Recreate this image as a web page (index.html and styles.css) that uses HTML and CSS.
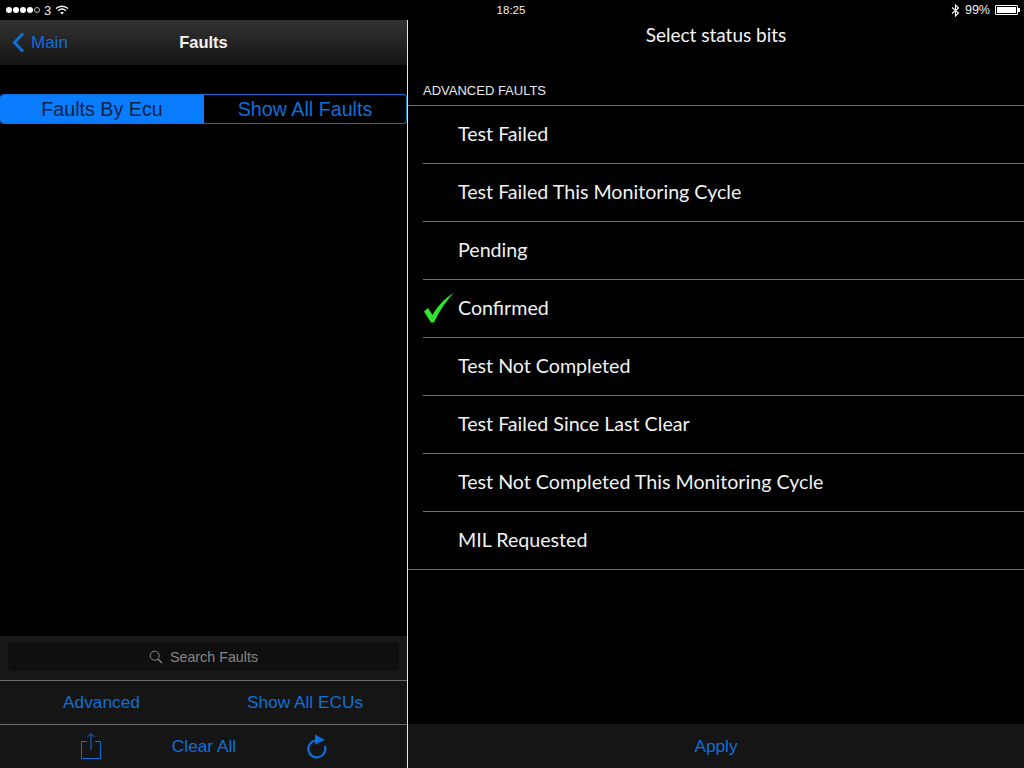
FILE: index.html
```html
<!DOCTYPE html>
<html lang="en">
<head>
<meta charset="utf-8">
<title>Faults</title>
<link rel="stylesheet" href="styles.css">
</head>
<body>
<div class="app">
  <header class="status">
    <div class="status-left">
      <span class="dots"><i></i><i></i><i></i><i></i><i class="empty"></i></span>
      <span class="carrier">3</span>
      <svg class="wifi" width="14" height="10" viewBox="0 0 14 10"><path d="M1 3.600C4.400.5 9.600.5 13 3.600" fill="none" stroke="#fff" stroke-width="1.400"/><path d="M3.100 5.700c2.300-2 5.500-2 7.800 0" fill="none" stroke="#fff" stroke-width="1.400"/><path d="M7 9.600 5 7.600c1.200-.9 2.800-.9 4 0z" fill="#fff"/></svg>
    </div>
    <div class="status-time">18:25</div>
    <div class="status-right">
      <svg class="bt" width="9" height="13" viewBox="0 0 9 13"><path d="M1 3.500 7.500 9 4.500 12V1L7.500 4 1 9.500" fill="none" stroke="#fff" stroke-width="1.100"/></svg>
      <span class="pct">99%</span>
      <span class="battery"><span class="battery-fill"></span></span>
    </div>
  </header>
  <div class="panes">
    <section class="left">
      <nav class="nav">
        <div class="back">
          <svg width="13" height="21" viewBox="0 0 13 21"><path d="M11 1.500 2.500 10.500 11 19.500" fill="none" stroke="#0f6fd8" stroke-width="3"/></svg>
          <span>Main</span>
        </div>
        <div class="nav-title">Faults</div>
      </nav>
      <div class="segment">
        <div class="seg seg-on">Faults By Ecu</div>
        <div class="seg seg-off">Show All Faults</div>
      </div>
      <div class="grow"></div>
      <div class="search-bar">
        <div class="search-field">
          <svg width="14" height="14" viewBox="0 0 14 14"><circle cx="5.700" cy="5.700" r="4.500" fill="none" stroke="#8a8a8a" stroke-width="1"/><path d="M9 9l4 4" stroke="#8a8a8a" stroke-width="1.200"/></svg>
          <span>Search Faults</span>
        </div>
      </div>
      <div class="actions">
        <span class="act act-a">Advanced</span>
        <span class="act act-b">Show All ECUs</span>
      </div>
      <div class="toolbar">
        <svg class="share" width="22" height="28" viewBox="0 0 22 28"><path d="M7 9.500H1.500v17h19v-17H15" fill="none" stroke="#0f6fd8" stroke-width="1"/><path d="M11 18V1.500M7.500 5 11 1.500 14.500 5" fill="none" stroke="#0f6fd8" stroke-width="1"/></svg>
        <span class="clear">Clear All</span>
        <svg class="reload" width="22" height="25" viewBox="0 0 22 25"><path d="M9.500 6.500A8.500 8.500 0 1 0 18.800 12" fill="none" stroke="#0f6fd8" stroke-width="2.200"/><path d="M9 .5 19 6 9 10.500z" fill="#0f6fd8"/></svg>
      </div>
    </section>
    <section class="right">
      <h1 class="title">Select status bits</h1>
      <div class="section-label">ADVANCED FAULTS</div>
      <ul class="list">
        <li class="row"><span>Test Failed</span></li>
        <li class="row"><span>Test Failed This Monitoring Cycle</span></li>
        <li class="row"><span>Pending</span></li>
        <li class="row">
          <svg class="check" width="32" height="32" viewBox="0 0 32 32"><path d="M1 19.500 5 16 9.500 23C14 15 21 7 31 .5 23 9 16 19 11 30.500H8z" fill="#2fe62f"/></svg>
          <span>Confirmed</span>
        </li>
        <li class="row"><span>Test Not Completed</span></li>
        <li class="row"><span>Test Failed Since Last Clear</span></li>
        <li class="row"><span>Test Not Completed This Monitoring Cycle</span></li>
        <li class="row row-last"><span>MIL Requested</span></li>
      </ul>
      <div class="grow"></div>
      <div class="apply-bar">Apply</div>
    </section>
  </div>
</div>
</body>
</html>
```
FILE: styles.css
```css
* { box-sizing: border-box; }
html, body { margin: 0; padding: 0; background: #000; }
.app {
  width: 1024px;
  height: 768px;
  overflow: hidden;
  display: flex;
  flex-direction: column;
  background: #000;
  color: #fff;
  font-family: "Liberation Sans", Arial, sans-serif;
}
.status {
  height: 20px;
  flex: none;
  display: grid;
  grid-template-columns: 1fr auto 1fr;
  align-items: center;
  font-size: 12px;
  color: #eee;
}
.status-left { display: flex; align-items: center; padding-left: 6px; gap: 4px; }
.dots { display: flex; gap: 1px; }
.dots i { width: 6px; height: 6px; border-radius: 50%; background: #fff; display: block; }
.dots i.empty { background: none; border: 1px solid #bbb; }
.carrier { font-size: 13px; }
.status-time { font-size: 11.500px; position: relative; left: -1px; }
.status-right { display: flex; justify-content: flex-end; align-items: center; gap: 5px; padding-right: 6px; }
.pct { font-size: 12.500px; }
.battery { width: 23px; height: 10px; border: 1px solid #fff; padding: 1px; display: block; position: relative; border-radius: 1px; }
.battery-fill { display: block; height: 100%; background: #fff; }
.battery::after { content: ""; position: absolute; right: -3px; top: 2px; width: 2px; height: 4px; background: #fff; }
.panes { flex: 1; display: flex; min-height: 0; }
.left {
  width: 408px;
  flex: none;
  border-right: 1px solid #e6e6e6;
  display: flex;
  flex-direction: column;
}
.right { flex: 1; display: flex; flex-direction: column; min-width: 0; }
.grow { flex: 1; }
.nav {
  height: 45px;
  flex: none;
  display: grid;
  grid-template-columns: 1fr auto 1fr;
  align-items: center;
  background: linear-gradient(#333, #141414);
}
.back { display: flex; align-items: center; gap: 6px; padding-left: 12px; color: #0f6fd8; font-size: 17px; }
.nav-title { font-size: 16.500px; font-weight: 700; color: #f2f2f2; }
.segment {
  margin-top: 29px;
  height: 30px;
  display: flex;
  border: 1px solid #0a6fdc;
  border-left: 0;
  border-radius: 4px;
  overflow: hidden;
  font-size: 19.700px;
}
.seg { display: flex; align-items: center; justify-content: center; }
.seg-on { width: 204px; background: #0a7cff; color: #06223f; margin: -1px 0; }
.seg-off { flex: 1; color: #0f6fd8; }
.search-bar {
  height: 45px;
  flex: none;
  background: #171717;
  padding: 6px 8px;
  border-bottom: 1px solid #6a6a6a;
}
.search-field {
  height: 29px;
  border-radius: 5px;
  background: #0f0f0f;
  color: #858585;
  font-size: 14.300px;
  display: flex;
  align-items: center;
  justify-content: center;
  gap: 7px;
}
.actions {
  height: 44px;
  flex: none;
  background: #151515;
  border-bottom: 1px solid #6a6a6a;
  display: grid;
  grid-template-columns: 203px 1fr;
  align-items: center;
  text-align: center;
  color: #0f6fd8;
  font-size: 17.300px;
}
.toolbar {
  flex: none;
  height: 43px;
  background: #151515;
  display: flex;
  justify-content: space-between;
  padding: 0 79px 0 80px;
  align-items: center;
  color: #0f6fd8;
  font-size: 17.300px;
}
.share { margin-top: -2px; }
.title {
  margin: 0;
  height: 30px;
  font-family: Lato, "Open Sans", sans-serif;
  font-weight: 400;
  font-size: 19px;
  line-height: 29px;
  text-align: center;
  color: #f4f4f4;
}
.section-label {
  margin-top: 32px;
  height: 23px;
  padding-left: 15px;
  font-size: 13px;
  line-height: 18px;
  color: #e8e8e8;
}
.list {
  list-style: none;
  margin: 0;
  padding: 0;
  border-top: 1px solid #6e6e6e;
}
.row {
  position: relative;
  height: 58px;
  margin-left: 15px;
  padding-left: 35px;
  padding-bottom: 2px;
  border-bottom: 1px solid #6e6e6e;
  display: flex;
  align-items: center;
  font-family: Lato, "Open Sans", sans-serif;
  font-size: 19.650px;
  color: #f2f2f2;
}
.row-last { margin-left: 0; padding-left: 50px; }
.check { position: absolute; left: 0; top: 12px; }
.apply-bar {
  height: 44px;
  flex: none;
  background: #151515;
  color: #0f6fd8;
  font-size: 17.300px;
  padding-top: 1px;
  display: flex;
  align-items: center;
  justify-content: center;
}
```
